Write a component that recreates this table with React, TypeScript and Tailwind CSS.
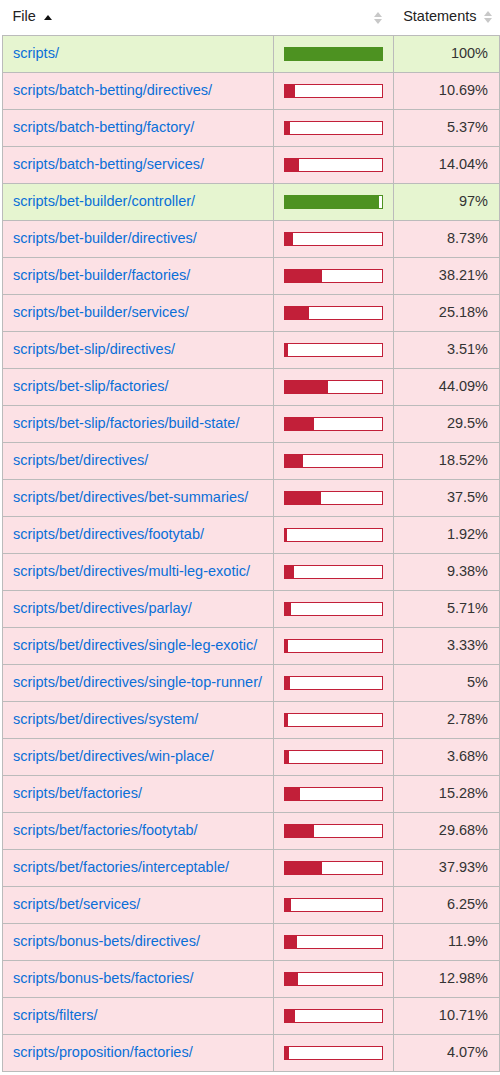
import React from "react";

type Row = { file: string; pct: number; label: string };

const rows: Row[] = [
  { file: "scripts/", pct: 100, label: "100%" },
  { file: "scripts/batch-betting/directives/", pct: 10.69, label: "10.69%" },
  { file: "scripts/batch-betting/factory/", pct: 5.37, label: "5.37%" },
  { file: "scripts/batch-betting/services/", pct: 14.04, label: "14.04%" },
  { file: "scripts/bet-builder/controller/", pct: 97, label: "97%" },
  { file: "scripts/bet-builder/directives/", pct: 8.73, label: "8.73%" },
  { file: "scripts/bet-builder/factories/", pct: 38.21, label: "38.21%" },
  { file: "scripts/bet-builder/services/", pct: 25.18, label: "25.18%" },
  { file: "scripts/bet-slip/directives/", pct: 3.51, label: "3.51%" },
  { file: "scripts/bet-slip/factories/", pct: 44.09, label: "44.09%" },
  { file: "scripts/bet-slip/factories/build-state/", pct: 29.5, label: "29.5%" },
  { file: "scripts/bet/directives/", pct: 18.52, label: "18.52%" },
  { file: "scripts/bet/directives/bet-summaries/", pct: 37.5, label: "37.5%" },
  { file: "scripts/bet/directives/footytab/", pct: 1.92, label: "1.92%" },
  { file: "scripts/bet/directives/multi-leg-exotic/", pct: 9.38, label: "9.38%" },
  { file: "scripts/bet/directives/parlay/", pct: 5.71, label: "5.71%" },
  { file: "scripts/bet/directives/single-leg-exotic/", pct: 3.33, label: "3.33%" },
  { file: "scripts/bet/directives/single-top-runner/", pct: 5, label: "5%" },
  { file: "scripts/bet/directives/system/", pct: 2.78, label: "2.78%" },
  { file: "scripts/bet/directives/win-place/", pct: 3.68, label: "3.68%" },
  { file: "scripts/bet/factories/", pct: 15.28, label: "15.28%" },
  { file: "scripts/bet/factories/footytab/", pct: 29.68, label: "29.68%" },
  { file: "scripts/bet/factories/interceptable/", pct: 37.93, label: "37.93%" },
  { file: "scripts/bet/services/", pct: 6.25, label: "6.25%" },
  { file: "scripts/bonus-bets/directives/", pct: 11.9, label: "11.9%" },
  { file: "scripts/bonus-bets/factories/", pct: 12.98, label: "12.98%" },
  { file: "scripts/filters/", pct: 10.71, label: "10.71%" },
  { file: "scripts/proposition/factories/", pct: 4.07, label: "4.07%" },
];

function SortIcon() {
  return (
    <svg width="8" height="12" viewBox="0 0 8 12" className="inline-block">
      <path d="M0 5 L4 0 L8 5 Z" fill="#c8c8c8" />
      <path d="M0 7 L4 12 L8 7 Z" fill="#c8c8c8" />
    </svg>
  );
}

function SortedUp() {
  return (
    <svg width="8" height="5" viewBox="0 0 8 5" className="inline-block">
      <path d="M0 5 L4 0 L8 5 Z" fill="#111" />
    </svg>
  );
}

export default function App() {
  return (
    <div className="w-[500px] bg-white pl-[2px] pt-[1px] font-['Liberation_Sans',Arial,sans-serif] text-[14.5px] text-[#333]">
      <table className="w-[497px] border-collapse table-fixed">
        <colgroup>
          <col className="w-[271px]" />
          <col className="w-[120px]" />
          <col className="w-[106px]" />
        </colgroup>
        <thead>
          <tr className="h-[34px]">
            <th className="text-left font-normal pl-[10px] pb-[1px] text-[#222]">
              <span className="inline-flex items-center gap-[8px]">
                File <SortedUp />
              </span>
            </th>
            <th className="text-right pr-[12px] pb-[1px]">
              <SortIcon />
            </th>
            <th className="text-right font-normal pr-[8px] pb-[1px] text-[#222]">
              <span className="inline-flex items-center gap-[7px]">
                Statements <SortIcon />
              </span>
            </th>
          </tr>
        </thead>
        <tbody>
          {rows.map((r) => {
            const high = r.pct >= 80;
            return (
              <tr
                key={r.file}
                className={`h-[37px] ${high ? "bg-[#e6f5d0]" : "bg-[#fce1e5]"}`}
              >
                <td className="border border-[#bbb] pl-[10px] whitespace-nowrap">
                  <a href="#" className="text-[#0a6fd8] no-underline">
                    {r.file}
                  </a>
                </td>
                <td className="border border-[#bbb] pl-[10px]">
                  <div
                    className={`w-[99px] h-[14px] border bg-white flex ${
                      high ? "border-[#4d9221]" : "border-[#c21f39]"
                    }`}
                  >
                    <div
                      className={high ? "bg-[#4d9221] h-full" : "bg-[#c21f39] h-full"}
                      style={{ width: `${r.pct}%` }}
                    />
                  </div>
                </td>
                <td className="border border-[#bbb] text-right pr-[11px]">
                  {r.label}
                </td>
              </tr>
            );
          })}
        </tbody>
      </table>
    </div>
  );
}
